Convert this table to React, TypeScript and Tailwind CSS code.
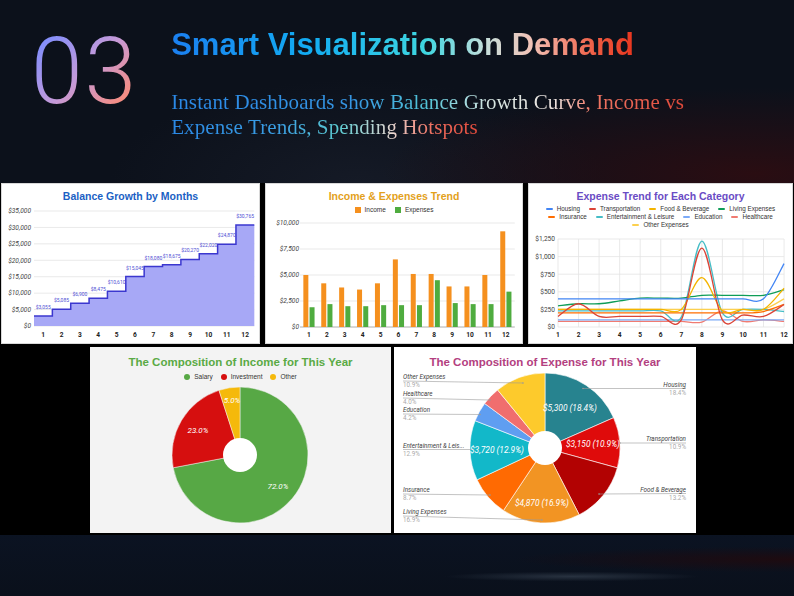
import React from 'react';

type Pt = [number, number];

function smoothPath(pts: Pt[]) {
  let d = `M${pts[0][0]},${pts[0][1]}`;
  for (let i = 0; i < pts.length - 1; i++) {
    const p0 = pts[i - 1] || pts[i];
    const p1 = pts[i];
    const p2 = pts[i + 1];
    const p3 = pts[i + 2] || p2;
    const c1x = p1[0] + (p2[0] - p0[0]) / 6;
    const c1y = p1[1] + (p2[1] - p0[1]) / 6;
    const c2x = p2[0] - (p3[0] - p1[0]) / 6;
    const c2y = p2[1] - (p3[1] - p1[1]) / 6;
    d += ` C${c1x},${c1y} ${c2x},${c2y} ${p2[0]},${p2[1]}`;
  }
  return d;
}

function slicePath(cx: number, cy: number, r: number, a0: number, a1: number) {
  const p = (a: number) => [cx + r * Math.sin(a), cy - r * Math.cos(a)];
  const [x0, y0] = p(a0);
  const [x1, y1] = p(a1);
  const large = a1 - a0 > Math.PI ? 1 : 0;
  return `M${cx},${cy} L${x0},${y0} A${r},${r} 0 ${large} 1 ${x1},${y1} Z`;
}

const months = [1, 2, 3, 4, 5, 6, 7, 8, 9, 10, 11, 12];

// ---------- Balance growth ----------
const balance = [3055, 5085, 6900, 8475, 10610, 15045, 18080, 18675, 20270, 22020, 24870, 30765];

function BalanceChart() {
  const x0 = 33;
  const step = 18.36;
  const base = 143;
  const y = (v: number) => base - (v / 35000) * 115;
  let line = '';
  balance.forEach((v, i) => {
    const xs = x0 + step * i;
    line += `${i === 0 ? 'M' : 'L'}${xs},${y(v)} L${xs + step},${y(v)} `;
  });
  const area = `${line} L${x0 + step * 12},${base} L${x0},${base} Z`;

  return (
    <div className="w-[259px] h-[161px] bg-white border border-[#d8d8d8] flex flex-col">
      <div className="h-[23px] shrink-0 pt-[7px] text-center text-[10.5px] leading-none font-bold text-[#1b5fc4]">
        Balance Growth by Months
      </div>
      <svg width="257" height="136" viewBox="1 24 257 136" className="shrink-0 font-['Roboto',sans-serif]">
        {[0, 5000, 10000, 15000, 20000, 25000, 30000, 35000].map((v) => (
          <g key={v}>
            <line x1={x0} x2={x0 + step * 12} y1={y(v)} y2={y(v)} stroke="#e3e3e3" strokeWidth="0.8" />
            <text x="30" y={y(v) + 2.3} textAnchor="end" fontSize="6.6" fontStyle="italic" fill="#444">
              ${v.toLocaleString('en-US')}
            </text>
          </g>
        ))}
        <path d={area} fill="#a7a8f6" />
        <path d={line} fill="none" stroke="#3b37cf" strokeWidth="1.5" />
        {balance.map((v, i) => (
          <text key={i} x={x0 + step * (i + 0.5)} y={y(v) - 7} textAnchor="middle" fontSize="5" fill="#5050d4">
            ${v.toLocaleString('en-US')}
          </text>
        ))}
        {months.map((m, i) => (
          <text key={m} x={x0 + step * (i + 0.5)} y="154" textAnchor="middle" fontSize="6.6" fontWeight="bold" fill="#222">
            {m}
          </text>
        ))}
      </svg>
    </div>
  );
}

// ---------- Income & expenses ----------
const income = [5000, 4200, 3800, 3600, 4200, 6500, 5100, 5100, 3900, 3900, 5000, 9200];
const expenses = [1900, 2200, 2000, 2000, 2100, 2100, 2100, 4500, 2300, 2200, 2200, 3400];

function TrendChart() {
  const x0 = 35;
  const step = 17.9;
  const base = 144;
  const y = (v: number) => base - (v / 10000) * 104;
  return (
    <div className="w-[258px] h-[161px] bg-white border border-[#d8d8d8] flex flex-col">
      <div className="h-[36px] shrink-0">
        <div className="pt-[7px] text-center text-[10.5px] leading-none font-bold text-[#e3a11b]">
          Income &amp; Expenses Trend
        </div>
        <div className="mt-[5px] flex justify-center gap-[9px] text-[6.5px] leading-none text-[#333]">
          <span className="flex items-center gap-[4px]">
            <span className="w-[6px] h-[6px] bg-[#f5901e]" />
            Income
          </span>
          <span className="flex items-center gap-[4px]">
            <span className="w-[6px] h-[6px] bg-[#4fac3f]" />
            Expenses
          </span>
        </div>
      </div>
      <svg width="256" height="123" viewBox="1 37 256 123" className="shrink-0 font-['Roboto',sans-serif]">
        {[0, 2500, 5000, 7500, 10000].map((v) => (
          <g key={v}>
            <line x1={x0} x2={x0 + step * 12} y1={y(v)} y2={y(v)} stroke={v === 0 ? '#999' : '#e3e3e3'} strokeWidth="0.8" />
            <text x="34" y={y(v) + 2.3} textAnchor="end" fontSize="6.6" fontStyle="italic" fill="#444">
              ${v.toLocaleString('en-US')}
            </text>
          </g>
        ))}
        {months.map((m, i) => {
          const c = x0 + step * (i + 0.5);
          return (
            <g key={m}>
              <rect x={c - 5.6} y={y(income[i])} width="5" height={base - y(income[i])} fill="#f5901e" />
              <rect x={c + 0.6} y={y(expenses[i])} width="5" height={base - y(expenses[i])} fill="#4fac3f" />
              <text x={c} y="154" textAnchor="middle" fontSize="6.6" fontWeight="bold" fill="#222">
                {m}
              </text>
            </g>
          );
        })}
      </svg>
    </div>
  );
}

// ---------- Expense trend by category ----------
const series = [
  { name: 'Housing', color: '#4285f4', data: [400, 400, 400, 400, 400, 400, 400, 400, 400, 400, 400, 900] },
  { name: 'Transportation', color: '#db4437', data: [150, 330, 150, 150, 150, 150, 100, 1120, 100, 170, 150, 320] },
  { name: 'Food & Beverage', color: '#f4b400', data: [250, 250, 250, 250, 250, 250, 250, 700, 230, 250, 250, 550] },
  { name: 'Living Expenses', color: '#0f9d58', data: [300, 330, 330, 370, 410, 410, 410, 450, 450, 450, 450, 530] },
  { name: 'Insurance', color: '#ff6d01', data: [200, 200, 200, 200, 200, 200, 200, 200, 200, 200, 220, 320] },
  { name: 'Entertainment & Leisure', color: '#46bdc6', data: [230, 230, 230, 230, 230, 230, 140, 1220, 200, 250, 250, 220] },
  { name: 'Education', color: '#7baaf7', data: [100, 100, 100, 100, 100, 100, 100, 100, 100, 100, 100, 100] },
  { name: 'Healthcare', color: '#f07b72', data: [80, 80, 80, 80, 80, 80, 80, 70, 230, 80, 100, 80] },
  { name: 'Other Expenses', color: '#fcd04f', data: [250, 250, 250, 250, 250, 250, 250, 250, 250, 250, 250, 400] },
];

function LegendLine({ name, color }: { name: string; color: string }) {
  return (
    <span className="flex items-center gap-[4px]">
      <span className="w-[7px] h-[2px] rounded-full" style={{ backgroundColor: color }} />
      {name}
    </span>
  );
}

function CategoryChart() {
  const x0 = 30;
  const step = 20.55;
  const base = 144;
  const y = (v: number) => base - (v / 1250) * 88;
  const rows = [series.slice(0, 4), series.slice(4, 8), series.slice(8)];
  return (
    <div className="w-[265px] h-[161px] bg-white border border-[#d8d8d8] flex flex-col">
      <div className="h-[48px] shrink-0">
        <div className="pt-[7px] text-center text-[10.5px] leading-none font-bold text-[#6a4bc4]">
          Expense Trend for Each Category
        </div>
        <div className="mt-[4px] flex flex-col items-center gap-[1.5px] text-[6.3px] leading-[6.5px] text-[#333]">
          {rows.map((row, i) => (
            <div key={i} className="flex gap-[9px]">
              {row.map((s) => (
                <LegendLine key={s.name} name={s.name} color={s.color} />
              ))}
            </div>
          ))}
        </div>
      </div>
      <svg width="263" height="111" viewBox="1 49 263 111" className="shrink-0 font-['Roboto',sans-serif]">
        {[0, 250, 500, 750, 1000, 1250].map((v) => (
          <g key={v}>
            <line x1={x0} x2={x0 + step * 11} y1={y(v)} y2={y(v)} stroke="#e3e3e3" strokeWidth="0.8" />
            <text x="27" y={y(v) + 2.3} textAnchor="end" fontSize="6.6" fill="#444">
              ${v.toLocaleString('en-US')}
            </text>
          </g>
        ))}
        {months.map((m, i) => (
          <g key={m}>
            <line x1={x0 + step * i} x2={x0 + step * i} y1={y(1250)} y2={base} stroke="#e3e3e3" strokeWidth="0.8" />
            <text x={x0 + step * i} y="154" textAnchor="middle" fontSize="6.6" fontWeight="bold" fill="#222">
              {m}
            </text>
          </g>
        ))}
        {[...series].reverse().map((s) => (
          <path
            key={s.name}
            d={smoothPath(s.data.map((v, i) => [x0 + step * i, y(v)] as Pt))}
            fill="none"
            stroke={s.color}
            strokeWidth="1.3"
          />
        ))}
      </svg>
    </div>
  );
}

// ---------- Income composition ----------
const incomeParts = [
  { name: 'Salary', value: 72, color: '#57a845' },
  { name: 'Investment', value: 23, color: '#d60f0f' },
  { name: 'Other', value: 5, color: '#f5b90b' },
];

function IncomePie() {
  const cx = 150;
  const cy = 108;
  let acc = 0;
  return (
    <div className="w-[301px] h-[186px] bg-[#f3f3f3] flex flex-col">
      <div className="h-[33px] shrink-0">
        <div className="pt-[10px] text-center text-[11.5px] leading-none font-bold text-[#5aaa45]">
          The Composition of Income for This Year
        </div>
        <div className="mt-[5px] flex justify-center gap-[8px] text-[6.5px] leading-none text-[#333]">
          {incomeParts.map((p) => (
            <span key={p.name} className="flex items-center gap-[4px]">
              <span className="w-[6px] h-[6px] rounded-full" style={{ backgroundColor: p.color }} />
              {p.name}
            </span>
          ))}
        </div>
      </div>
      <svg width="301" height="153" viewBox="0 33 301 153" className="shrink-0 font-['Roboto',sans-serif]">
        {incomeParts.map((p) => {
          const a0 = (acc / 100) * Math.PI * 2;
          acc += p.value;
          const a1 = (acc / 100) * Math.PI * 2;
          return <path key={p.name} d={slicePath(cx, cy, 68, a0, a1)} fill={p.color} stroke="#f3f3f3" strokeWidth="0.5" />;
        })}
        <circle cx={cx} cy={cy} r="17" fill="#fff" />
        <text x="188" y="142" textAnchor="middle" fontSize="8" fontStyle="italic" fill="#fff">72.0%</text>
        <text x="108" y="86" textAnchor="middle" fontSize="8" fontStyle="italic" fill="#fff">23.0%</text>
        <text x="142" y="56" textAnchor="middle" fontSize="8" fontStyle="italic" fill="#fff">5.0%</text>
      </svg>
    </div>
  );
}

// ---------- Expense composition ----------
const expenseParts = [
  { name: 'Housing', pct: 18.4, color: '#27838f', amount: '$5,300' },
  { name: 'Transportation', pct: 10.9, color: '#df0b0b', amount: '$3,150' },
  { name: 'Food & Beverage', pct: 13.2, color: '#b20202', amount: '' },
  { name: 'Living Expenses', pct: 16.9, color: '#f29423', amount: '$4,870' },
  { name: 'Insurance', pct: 8.7, color: '#ff6a02', amount: '' },
  { name: 'Entertainment & Leisure', pct: 12.9, color: '#12b8c9', amount: '$3,720' },
  { name: 'Education', pct: 4.2, color: '#5f9ef1', amount: '' },
  { name: 'Healthcare', pct: 4.0, color: '#f06e6e', amount: '' },
  { name: 'Other Expenses', pct: 10.9, color: '#fdca2c', amount: '' },
];

// ly: y of the leader line, ex/ey: where it ends inside the slice
const leaders = [
  { label: 'Other Expenses', pct: '10.9%', side: 'l', ly: 34, ex: 129, ey: 36 },
  { label: 'Healthcare', pct: '4.0%', side: 'l', ly: 51, ex: 96, ey: 53 },
  { label: 'Education', pct: '4.2%', side: 'l', ly: 67, ex: 86, ey: 67.5 },
  { label: 'Entertainment & Leis...', pct: '12.9%', side: 'l', ly: 102.5, ex: 78, ey: 102.5 },
  { label: 'Insurance', pct: '8.7%', side: 'l', ly: 147, ex: 96, ey: 148 },
  { label: 'Living Expenses', pct: '16.9%', side: 'l', ly: 169, ex: 148, ey: 173 },
  { label: 'Housing', pct: '18.4%', side: 'r', ly: 41.5, ex: 189, ey: 41.5 },
  { label: 'Transportation', pct: '10.9%', side: 'r', ly: 96, ex: 226, ey: 96 },
  { label: 'Food & Beverage', pct: '13.2%', side: 'r', ly: 146.5, ex: 205, ey: 147 },
];

const innerLabels: Record<number, Pt> = {
  0: [176, 64],
  1: [199, 100],
  3: [148, 159],
  5: [103, 106],
};

function ExpensePie() {
  const cx = 151;
  const cy = 101;
  const R = 75;
  const bounds: number[] = [];
  let acc = 0;
  expenseParts.forEach((p) => {
    bounds.push(acc);
    acc += p.pct;
  });
  const total = acc;
  const ang = (v: number) => (v / total) * Math.PI * 2;
  return (
    <div className="w-[302px] h-[186px] bg-white flex flex-col">
      <div className="h-[22px] shrink-0 pt-[10px] text-center text-[11.5px] leading-none font-bold text-[#b3407f]">
        The Composition of Expense for This Year
      </div>
      <svg width="302" height="164" viewBox="0 22 302 164" className="shrink-0 font-['Roboto',sans-serif]">
        {expenseParts.map((p, i) => (
          <path
            key={p.name}
            d={slicePath(cx, cy, R, ang(bounds[i]), ang(bounds[i] + p.pct))}
            fill={p.color}
            stroke="#fff"
            strokeWidth="0.6"
          />
        ))}
        <circle cx={cx} cy={cy} r="17" fill="#fff" />
        {leaders.map((l) => {
          const lx = l.side === 'l' ? 9 : 292;
          const anchor = l.side === 'l' ? 'start' : 'end';
          return (
            <g key={l.label}>
              <line x1={lx} y1={l.ly} x2={l.ex} y2={l.ey} stroke="#9a9a9a" strokeWidth="0.6" />
              <circle cx={l.ex} cy={l.ey} r="0.8" fill="#9a9a9a" />
              <text x={lx} y={l.ly - 1.8} textAnchor={anchor} fontSize="6.3" fontStyle="italic" fill="#444">
                {l.label}
              </text>
              <text x={lx} y={l.ly + 6} textAnchor={anchor} fontSize="6.3" fill="#aaa">
                {l.pct}
              </text>
            </g>
          );
        })}
        {Object.entries(innerLabels).map(([k, [x, y]]) => {
          const p = expenseParts[Number(k)];
          return (
            <text key={k} x={x} y={y} textAnchor="middle" fontSize="8.4" fontStyle="italic" fill="#fff">
              {p.amount} ({p.pct.toFixed(1)}%)
            </text>
          );
        })}
      </svg>
    </div>
  );
}

export default function App() {
  return (
    <div className="w-[794px] h-[596px] overflow-hidden flex flex-col bg-[#0c111b] font-['Liberation_Sans',Arial,sans-serif]">
      <header className="h-[183px] shrink-0 flex bg-[radial-gradient(ellipse_at_95%_95%,#2a0d12_0%,transparent_35%),radial-gradient(ellipse_at_45%_100%,#151a26_0%,transparent_40%)]">
        <div className="pl-[31px] pt-[25px]">
          <div className="font-['Roboto',sans-serif] font-light text-[93px] leading-none tracking-[2px] bg-[linear-gradient(135deg,#7b8dff_10%,#c59ad9_50%,#ff8a70_90%)] bg-clip-text text-transparent">
            03
          </div>
        </div>
        <div className="ml-[33px] pt-[29px] flex flex-col">
          <h1 className="w-fit text-[31px] leading-none font-bold bg-[linear-gradient(90deg,#1b7ff0_0%,#12acf2_30%,#3fd6e0_55%,#c6dfdb_68%,#f2c2b6_78%,#ef5a40_92%,#e8361f_100%)] bg-clip-text text-transparent">
            Smart Visualization on Demand
          </h1>
          <div className="mt-[30px] font-['Liberation_Serif',serif] text-[21px] leading-[25px] tracking-[0.1px]">
            <div className="w-fit bg-[linear-gradient(90deg,#2a88e6_0%,#3596e4_35%,#52c4d6_50%,#d6e6e2_62%,#ece2de_75%,#ef7664_82%,#e0493a_100%)] bg-clip-text text-transparent">
              Instant Dashboards show Balance Growth Curve, Income vs
            </div>
            <div className="w-fit bg-[linear-gradient(90deg,#2a88e6_0%,#3a9ee2_35%,#5ccad0_55%,#e8d8d2_72%,#ef7060_85%,#e0493a_100%)] bg-clip-text text-transparent">
              Expense Trends, Spending Hotspots
            </div>
          </div>
        </div>
      </header>

      <main className="h-[352px] shrink-0 bg-black flex flex-col gap-[3px]">
        <div className="flex pl-[1px] gap-[5px]">
          <BalanceChart />
          <TrendChart />
          <CategoryChart />
        </div>
        <div className="flex pl-[90px] gap-[3px]">
          <IncomePie />
          <ExpensePie />
        </div>
      </main>

      <footer className="flex-1 bg-[radial-gradient(ellipse_16%_8%_at_72%_68%,#283240_0%,transparent_100%),radial-gradient(ellipse_at_100%_40%,#1e0b10_0%,transparent_25%),linear-gradient(180deg,#0b1322,#0a101b)]" />
    </div>
  );
}
